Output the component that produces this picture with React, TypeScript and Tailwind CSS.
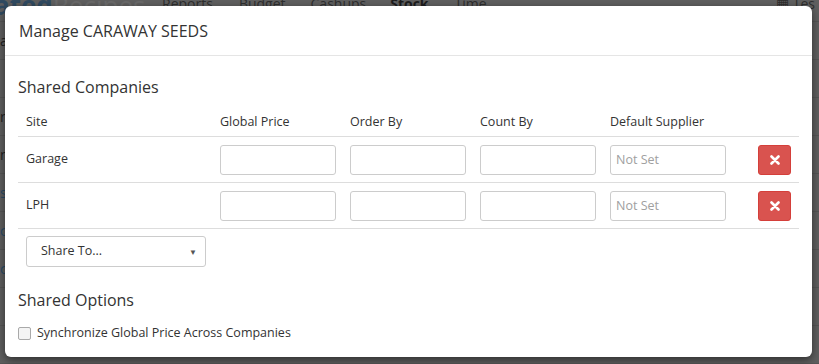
import React from "react";

const cols = "grid grid-cols-[194px_130px_130px_130px_148px_1fr]";

function Cell({ children }: { children?: React.ReactNode }) {
  return <div className="flex items-center px-2">{children}</div>;
}

function TextBox({ placeholder }: { placeholder?: string }) {
  return (
    <input
      readOnly
      placeholder={placeholder}
      className="h-[30px] w-[116px] rounded-[3px] border border-[#cccccc] bg-white px-[5px] text-[12.5px] text-[#333] placeholder:text-[#a0a0a0] outline-none"
    />
  );
}

function SiteRow({ name }: { name: string }) {
  return (
    <div className={`${cols} h-[46px] border-b border-[#dddddd]`}>
      <Cell>
        <span className="text-[12.5px] text-[#333]">{name}</span>
      </Cell>
      <Cell>
        <TextBox />
      </Cell>
      <Cell>
        <TextBox />
      </Cell>
      <Cell>
        <TextBox />
      </Cell>
      <Cell>
        <TextBox placeholder="Not Set" />
      </Cell>
      <div className="flex items-center pl-2">
        <button className="flex h-[30px] w-[33px] items-center justify-center rounded-[3px] border border-[#d43f3a] bg-[#d9534f]">
          <svg width="10" height="10" viewBox="0 0 10 10">
            <path d="M1.5 1.5 L8.5 8.5 M8.5 1.5 L1.5 8.5" stroke="white" strokeWidth="2.6" strokeLinecap="round" />
          </svg>
        </button>
      </div>
    </div>
  );
}

export default function App() {
  return (
    <div className="relative h-[364px] w-[819px] overflow-hidden bg-[#5f5f5f] font-['Open_Sans',sans-serif]">
      {/* dimmed page behind the modal */}
      <div className="flex h-[22px] items-start border-b border-[#555] text-[14px] leading-[8px] text-[#2e2e2e]">
        <span className="ml-[-6px] w-[150px] text-[26px] leading-[10px] text-[#304a60]">
          <span className="font-bold">ated</span>
          <span className="text-[#6a6a6a]">Recipes</span>
        </span>
        <span className="ml-[18px]">Reports</span>
        <span className="ml-[26px]">Budget</span>
        <span className="ml-[25px]">Cashups</span>
        <span className="ml-[24px] font-bold text-[#1c1c1c]">Stock</span>
        <span className="ml-[26px]">Time</span>
        <span className="ml-auto mr-[4px]">▦ Tes</span>
      </div>
      <div className="flex flex-col text-[14px] text-[#222]">
        {["a", "", "r", "n", "s", "c", "c", "", ""].map((t, i) => (
          <div key={i} className="h-[38px] border-b border-[#555] leading-[38px]">
            <span className={i > 3 && i < 7 ? "text-[#2a4a66]" : ""}>{t}</span>
          </div>
        ))}
      </div>

      {/* modal */}
      <div className="absolute left-[5px] top-[6px] flex h-[351px] w-[807px] flex-col rounded-[6px] bg-white shadow-[0_3px_9px_rgba(0,0,0,0.5)]">
        <div className="flex h-[50px] items-center border-b border-[#e5e5e5] px-[14px]">
          <h4 className="text-[16px] text-[#333]">Manage CARAWAY SEEDS</h4>
        </div>
        <div className="flex flex-col px-[13px]">
          <h4 className="mt-[19px] text-[16px] leading-[24px] text-[#333]">Shared Companies</h4>
          <div className={`${cols} mt-[10px] h-[28px] border-b border-[#dddddd] text-[12.5px] text-[#333]`}>
            <Cell>Site</Cell>
            <Cell>Global Price</Cell>
            <Cell>Order By</Cell>
            <Cell>Count By</Cell>
            <Cell>Default Supplier</Cell>
            <Cell />
          </div>
          <SiteRow name="Garage" />
          <SiteRow name="LPH" />
          <div className="flex px-2 pt-[7px]">
            <div className="flex h-[31px] w-[180px] items-center justify-between rounded-[3px] border border-[#cccccc] pl-[14px] pr-[8px] text-[12.5px] text-[#333]">
              <span>Share To...</span>
              <span className="text-[8px] text-[#555]">▼</span>
            </div>
          </div>
          <h4 className="mt-[21px] text-[16px] leading-[24px] text-[#333]">Shared Options</h4>
          <label className="mt-[12px] flex items-center gap-[6px] text-[12.5px] text-[#333]">
            <span className="h-[13px] w-[13px] rounded-[2px] border border-[#a9a9a9] bg-[#f4f4f4]" />
            Synchronize Global Price Across Companies
          </label>
        </div>
      </div>
    </div>
  );
}
